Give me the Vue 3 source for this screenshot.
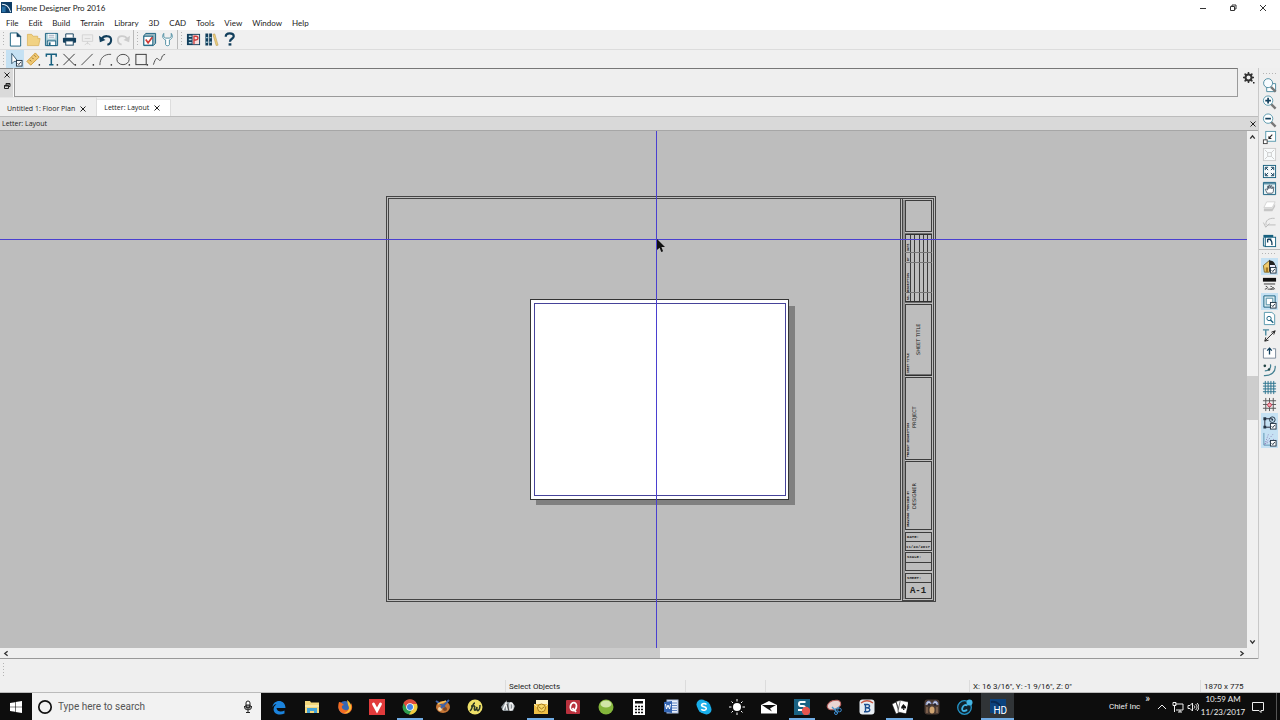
<script setup>
const menus = ['File', 'Edit', 'Build', 'Terrain', 'Library', '3D', 'CAD', 'Tools', 'View', 'Window', 'Help']

const T = '#17607f'
const D = '#123f5c'
const dot = '<rect x="13.5" y="13" width="1.5" height="1.5" fill="#222"/>'
const check = '<rect x="9" y="9" width="6" height="6" fill="#fff" stroke="#234" stroke-width="1"/><path d="M10.3 12l1.2 1.4 2.2-2.8" fill="none" stroke="#234"/>'

const fileTools = [
  { name: 'New', art: `<path d="M2.500 1H10l3.500 3.500V15h-11z" fill="#fff" stroke="${T}"/><path d="M9.500 1v4h4z" fill="${D}" stroke="${D}" stroke-width=".6"/>` },
  { name: 'Open', art: '<path d="M1.500 14.500V2.500h4.500l1.500 2h5v2.500h2.500L13.500 14.500z" fill="#f1d283" stroke="#d9b258" stroke-width=".8"/>' },
  { name: 'Save', art: `<path d="M1.500 1.500h13v13h-13z" fill="#a9cbd5" stroke="${T}"/><rect x="4" y="2" width="8" height="5" fill="#fff"/><path d="M5 3.500h6M5 5.500h6" stroke="#9ab"/><rect x="3.500" y="9.500" width="9" height="5" fill="#fff" stroke="${T}"/><path d="M5 11h2v3H5z" fill="${T}"/>` },
  { name: 'Print', art: `<path d="M4 6V2h8v4" fill="#fff" stroke="${D}"/><rect x="1" y="6" width="14" height="5.500" rx="1" fill="${D}"/><rect x="4" y="9.500" width="8" height="4.500" fill="#fff" stroke="${D}"/>` },
  { name: 'Send to layout', art: '<path d="M2.500 3h11v7h-11zM8 10v3M5 14l3-3 3 3M5 7h6" fill="#eee" stroke="#d3d3d3"/>' },
  { name: 'Undo', art: `<path d="M4 7.500C6 3.500 14 3 14 8.500c0 3-2 4.500-4 5" fill="none" stroke="${D}" stroke-width="2.200"/><path d="M1 4l1 7 6-2.500z" fill="${D}"/>` },
  { name: 'Redo', art: '<path d="M12 7.500C10 3.500 2 3 2 8.500c0 3 2 4.500 4 5" fill="none" stroke="#ccc" stroke-width="2"/><path d="M15 4l-1 7-6-2.500z" fill="#ccc"/>' }
]
const prefTools = [
  { name: 'Default settings', art: `<path d="M2 4l2-2.500h10.500v10.500L12 14.500H2z" fill="#9bb8c2" stroke="${T}"/><rect x="2" y="4.500" width="9.500" height="9.500" fill="#fff" stroke="${T}"/><path d="M4 8l2.500 3.500L11 5.500" fill="none" stroke="#d03a35" stroke-width="1.800"/>` },
  { name: 'Preferences', art: '<path d="M4 1.500C1.500 5 3.500 7.500 6 8.500v5c0 1.500 4 1.500 4 0v-5c2.500-1 4.500-3.500 2-7V5l-2 1.500H6L4 5z" fill="#fff" stroke="#4b8ca0"/>' }
]
const helpTools = [
  { name: 'Plan database', art: `<rect x="1" y="2" width="14" height="12" fill="${D}"/><path d="M3 4.500h3M3 8h3M3 11.500h3" stroke="#b8dbe6" stroke-width="1.500"/><rect x="7" y="3" width="7" height="10" fill="#f6dede"/><path d="M8.500 13V4.500h2c3 0 3 4 0 4h-2" fill="none" stroke="#cf3a3a" stroke-width="1.400"/>` },
  { name: 'Library browser', art: `<path d="M1.500 1.500h3v13h-3zM5.500 1.500h3v13h-3z" fill="${D}"/><path d="M2 6h2M6 6h2M2 11h2M6 11h2" stroke="#9cc6d4" stroke-width="1.500"/><path d="M9.500 2.500l2-.5L15 14l-2 .5z" fill="#edce7d" stroke="#a98b3a" stroke-width=".5"/>` },
  { name: 'Help', art: `<path d="M4 5c0-5 8.500-4.500 8.500-.5 0 3-4 2.500-4 6" fill="none" stroke="${D}" stroke-width="2.400"/><rect x="7" y="12" width="3" height="2.500" fill="${D}"/>` }
]
const drawTools = [
  { name: 'Select objects', on: true, art: `<path d="M4 1.500v11l2.500-2.500h4z" fill="#fff" stroke="#35576f"/>${check}` },
  { name: 'Dimension', art: `<path d="M1 10L10 1 14 5.500 5 14z" fill="#efc873" stroke="#cf9a38"/><path d="M4 8.500l1.500 1.500M6.500 6L8 7.500M9 3.500l1.500 1.500" stroke="#8c6820"/>${dot}` },
  { name: 'Text', art: `<path d="M2.500 5V2.500h10.500V5M7.800 2.500v11M5.500 13.500h4.600" fill="none" stroke="${T}" stroke-width="1.600"/>${dot}` },
  { name: 'Cross', art: `<path d="M1.500 2l12 12M13.500 2l-12 12" stroke="#333"/>${dot}` },
  { name: 'Line', art: `<path d="M1.500 14l12-12" stroke="#444"/>${dot}` },
  { name: 'Arc', art: `<path d="M2 14C2 6 7 2 14 2.500" fill="none" stroke="#555"/>${dot}` },
  { name: 'Circle', art: `<ellipse cx="7.500" cy="8" rx="6.500" ry="5.500" fill="none" stroke="#444"/>${dot}` },
  { name: 'Box', art: `<rect x="2" y="2.500" width="11" height="11" fill="none" stroke="#333"/>${dot}` },
  { name: 'Spline', art: '<path d="M1.500 13.500C4 6 5 6 7 8c2 2.500 3-.5 3.500-2.500S12.500 3 14 2.500" fill="none" stroke="#444"/>' }
]

const glass = '<path d="M9.500 9.500l5 5" stroke="#777" stroke-width="2.500"/>'
const frame = (c) => `<rect x="1.5" y="1.5" width="13" height="13" fill="#f8fbfc" stroke="${c}"/>`
const viewTools = [
  { name: 'Zoom', art: `<path d="M5 6h9.500v8.500H5z" fill="#fff" stroke="#4d8ba0"/>${glass}<circle cx="6.500" cy="5.500" r="4.800" fill="#f8fcff" stroke="#4d8ba0"/>` },
  { name: 'Zoom in', art: `${glass}<circle cx="6.500" cy="6" r="5" fill="#fff" stroke="#5698ac"/><path d="M3.500 6h6M6.500 3v6" stroke="${D}" stroke-width="1.800"/>` },
  { name: 'Zoom out', art: `${glass}<circle cx="6.500" cy="6" r="5" fill="#fff" stroke="#5698ac"/><path d="M3.500 6h6" stroke="${D}" stroke-width="1.800"/>` },
  { name: 'Undo zoom', art: `<rect x="4" y="1.500" width="10.500" height="10.500" fill="#fff" stroke="#5698ac"/><path d="M7 9l4-4" stroke="#222" stroke-width="1.200"/><path d="M7 6v3.500h3.500z" fill="#222"/><rect x="1.500" y="10.500" width="4" height="4" fill="#fff" stroke="#444"/>` },
  { name: 'Fill window building', art: `${frame('#ccc')}<path d="M3 3l3 3M13 3l-3 3M3 13l3-3M13 13l-3-3M6 6h4v4H6z" fill="none" stroke="#ccc"/>` },
  { name: 'Fill window', art: `${frame(T)}<path d="M4 4l2.500 2.500M12 4L9.500 6.500M4 12l2.500-2.500M12 12L9.500 9.500M3.500 6.500v-3h3M9.500 3.500h3v3M3.500 9.500v3h3M9.500 12.500h3v-3" fill="none" stroke="${D}"/>` },
  { name: 'Pan', art: `<path d="M1.500 1.500h13v13h-13z" fill="#e5f2f5" stroke="${T}"/><path d="M2 3h12" stroke="${T}"/><path d="M5.500 13L3.500 9l1-.5 1.500 1V5.500h1V8l.5-3.500h1V8l1-3h1v3.500l1-2h1l-.5 5-1 1.500z" fill="#fff" stroke="#345" stroke-width=".8"/>` },
  { name: 'Layer up', art: '<path d="M5 3h9l-3 6H2z" fill="#fff" stroke="#d3d3d3"/><path d="M2 10h9l3-5v3l-3 5H2z" fill="#c6c6c6"/>' },
  { name: 'Rotate back', art: '<path d="M13.500 2.500C7 2 3 5 4.500 10M1.500 7l2.500 5 4-4M6 9.500h8.500" fill="none" stroke="#bbb"/>' },
  { name: 'Swap views', art: `<path d="M1.500 2H12v3H1.500z" fill="${T}"/><path d="M1.500 5v9H4" fill="none" stroke="${T}"/><rect x="3.500" y="4.500" width="11" height="10" fill="#fff" stroke="${T}"/><path d="M6 6.500h4M6 6.500v3.500M6 6.500c4 0 5 3 4.500 6.500" fill="none" stroke="${D}" stroke-width="1.400"/>` }
]
const showTools = [
  { name: 'Color', on: true, art: `<path d="M1.500 7L8 1.500V14H2.500z" fill="#f1cb6d" stroke="#7b6930"/><path d="M8 1.500L14.500 7v6H8z" fill="#eef" stroke="#333"/><path d="M8 1.500c4 0 6 3 6 5H8z" fill="#222"/><rect x="4" y="9" width="2.500" height="5" fill="#a57922"/>${check}` },
  { name: 'Line weights', art: '<rect x="1" y="2" width="14" height="4" fill="#111"/><path d="M2 8.500h12" stroke="#333"/><path d="M3 14c3 0 4-3 1-3M6 14h7M12 12l1.500 2M9 11c3 0 3 3 0 3" fill="none" stroke="#444"/>' },
  { name: 'Page', on: true, art: `<path d="M2 2h12v12H2z" fill="#dcecf3" stroke="${T}"/><path d="M4.500 4.500h7v7h-7z" fill="#fff" stroke="#4d8ba0"/>${check}` },
  { name: 'Print preview', art: `<path d="M2.500 1.500h8L13.500 4v10.500h-11z" fill="#fff" stroke="#5698ac"/><circle cx="7.500" cy="8" r="2.300" fill="none" stroke="${T}"/><path d="M9 9.500l3 3" stroke="${T}" stroke-width="1.600"/>` },
  { name: 'Text leader', art: `<path d="M1 2h6.500M4 2v6" stroke="#4d8ba0" stroke-width="1.500"/><path d="M3 14L14 3M14 3l-4 1.500M14 3l-1.500 4M3 14l1-4M3 14l4-1" stroke="#222" fill="none"/>` },
  { name: 'Import', art: `<path d="M4.500 4h-3v10h13V4h-3" fill="#fff" stroke="#789"/><path d="M8 10V4M5.500 6L8 3.500 10.500 6" fill="none" stroke="${D}" stroke-width="1.400"/>` },
  { name: 'Arc snaps', art: '<circle cx="3" cy="3" r="1.400" fill="#244"/><path d="M9 1.500c1 4-2 7-6 7M14 3c1 6-4 11-12 10.500" fill="none" stroke="#438092" stroke-width="1.300"/><circle cx="7.500" cy="7" r="1.300" fill="#244"/>' },
  { name: 'Grid', art: `<path d="M1 3.500h14M1 6.500h14M1 9.500h14M1 12.500h14M3.500 1v14M6.500 1v14M9.500 1v14M12.500 1v14" stroke="#28718d"/>` },
  { name: 'Grid snaps', art: '<path d="M1 4h14M1 8h14M1 12h14M4 1v14M8 1v14M12 1v14" stroke="#555"/><circle cx="8" cy="8.500" r="2" fill="#efadb6" stroke="#cf3a52"/>' },
  { name: 'Object snaps', on: true, art: `<path d="M3 4v9h8M3 4h8" fill="none" stroke="#223"/><path d="M1.500 2.500h3v3h-3zM1.500 11.500h3v3h-3z" fill="#234"/><circle cx="11" cy="5" r="3" fill="none" stroke="#234"/><circle cx="11" cy="5" r="1" fill="#234"/>${check}` },
  { name: 'Angle snaps', on: true, art: `<path d="M2 1v13h12" fill="none" stroke="#5d93b1"/><path d="M3 13L12 2M3 13l11-6M3 13L7 2" stroke="#8b78b2" stroke-dasharray="1 1.500"/>${check}` }
]

const apps = [
  { name: 'Edge', art: '<path d="M1.500 8C2 0 14.500-.5 14.500 9H5.500c.5 4 5 4 8 2.500v3C7 17.500 1 13.500 3 8.500c-.5 0 2-4 5-4 2 0 3 1 3 2.500H6c0-3-3-2-4.500 1z" fill="#1b83dc"/>' },
  { name: 'File Explorer', art: '<path d="M1 2h5l1 1.500h8V14H1z" fill="#f3d77c"/><path d="M3 9h10v5h-3v-2H6v2H3z" fill="#43a3d8"/><path d="M1 6h14v2H1z" fill="#fae9a8"/>' },
  { name: 'Firefox', art: '<circle cx="8" cy="8.500" r="6.500" fill="#3467b3"/><path d="M2 3c-2 6 0 11 6 12 6 0 9-6 6-11 0 5-3 8-6 7-4-1-4-5-1-5C5 4 4 3 2 3z" fill="#f26b22"/><path d="M10 1c3 2 5 5 4 9-1 3-4 5-7 4 5-1 6-5 4-8z" fill="#f9bf37"/>' },
  { name: 'Vivaldi', art: '<rect width="16" height="16" fill="#e13a3b"/><path d="M4.500 5L8 11.500 11.500 5" fill="none" stroke="#fff" stroke-width="2.800" stroke-linecap="round"/>' },
  { name: 'Chrome', run: true, art: '<circle cx="8" cy="8" r="7.500" fill="#2f9e4f"/><path d="M1.500 4C4-1.500 13-1 15 5H8L4.500 9z" fill="#df4a3c"/><path d="M8 5h7c2 6-3 11-8 10.500l4-6.500z" fill="#f5c93d"/><circle cx="8" cy="8" r="3.800" fill="#fff"/><circle cx="8" cy="8" r="3" fill="#4386e8"/>' },
  { name: 'Paint', art: '<ellipse cx="8" cy="8" rx="7" ry="6" fill="#c77736"/><circle cx="5" cy="10" r="2" fill="#f3d7ac"/><circle cx="10" cy="10" r="2" fill="#7a4426"/><path d="M1 2l9 6M14 1L6 9" stroke="#3d62a8" stroke-width="2"/><path d="M3 5l8-3" stroke="#f4c25a" stroke-width="1.500"/>' },
  { name: 'Fw', art: '<circle cx="8" cy="8" r="7.500" fill="#eddf68"/><path d="M3 12c3-2 2-8 5-8M4 7h4M8 7c-2 6 1 5 2 1-1 6 3 4 3-2" fill="none" stroke="#283525" stroke-width="1.500"/>' },
  { name: 'Design 3D', art: '<path d="M1 8l4-5h7l3 4-2 5H3z" fill="#8c9499"/><path d="M3 11l3-7 1 7M10 4v7c4 0 4-7 0-7" fill="none" stroke="#f3f3f3" stroke-width="1.500"/><path d="M7 5l2 7" stroke="#444"/>' },
  { name: 'Outlook', run: true, art: '<rect x="3" y="1" width="12" height="9" fill="#fff4ca"/><path d="M1 5h14v10H1z" fill="#efbf44"/><path d="M1 5l7 6 7-6" fill="none" stroke="#fff1b5"/><circle cx="8.500" cy="9" r="4" fill="#f6d563" stroke="#a77a1c"/><path d="M6 8l2.500 2L11 8" fill="none" stroke="#a77a1c"/>' },
  { name: 'Quicken', art: '<rect x="1" y="1" width="14" height="14" rx="1" fill="#b9313d"/><ellipse cx="8.300" cy="7.500" rx="3" ry="4" transform="rotate(12 8 8)" fill="none" stroke="#fff" stroke-width="1.800"/><path d="M7.500 9l3.500 4" stroke="#fff" stroke-width="1.800"/>' },
  { name: 'Limewire', art: '<circle cx="8" cy="8" r="7.500" fill="#84b53b"/><ellipse cx="8" cy="5" rx="5.500" ry="3.500" fill="#d1e6a6"/>' },
  { name: 'Calculator', art: '<rect x="2" width="12" height="16" fill="#fff"/><rect x="4" y="2" width="8" height="2.500" fill="#111"/><path d="M4 7.500h8M4 10.500h8M4 13.500h8" stroke="#111" stroke-width="1.500" stroke-dasharray="2 1"/>' },
  { name: 'Word', art: '<rect x="4" y="1" width="11" height="13" fill="#e8f0fc" stroke="#a9bbdb"/><path d="M6 4h8M6 6.500h8M6 9h8M6 11.500h8" stroke="#5f83c1"/><path d="M1 3l8-1v12l-8-1z" fill="#3465b2"/><path d="M2.500 5l1 5 1.500-4 1.500 4 1-5" fill="none" stroke="#fff"/>' },
  { name: 'Skype', art: '<circle cx="5.500" cy="5.500" r="5" fill="#19aeea"/><circle cx="10.500" cy="10.500" r="5" fill="#19aeea"/><circle cx="8" cy="8" r="6.500" fill="#19aeea"/><path d="M10.500 5.500C8 3.500 5 5 5.700 6.700c.8 1.500 4.300.7 4.600 2.600.2 2-3.300 2.700-5 .9" fill="none" stroke="#fff" stroke-width="1.600"/>' },
  { name: 'Weather', art: '<circle cx="8" cy="8" r="4" fill="#fff"/><path d="M8 0v2.500M8 13.500V16M0 8h2.500M13.500 8H16M2.500 2.500l1.500 1.500M12 12l1.500 1.500M13.500 2.500L12 4M4 12l-1.500 1.500" stroke="#fff"/>' },
  { name: 'Mail', art: '<path d="M0 6l8-4 8 4v8.500H0z" fill="#fff"/><path d="M1 6h14l-6 3.500 2 3-5-3z" fill="#111"/>' },
  { name: 'Snagit', run: true, art: '<rect width="16" height="16" fill="#1a6283"/><path d="M11.500 3H6.500c-2 0-2 4 0 4h2.500c2.500 0 2.500 4 0 4H4" fill="none" stroke="#fff" stroke-width="2"/><circle cx="12" cy="12" r="4.200" fill="#e7554e"/>' },
  { name: 'Snipping Tool', art: '<ellipse cx="8" cy="6" rx="7" ry="4.500" transform="rotate(-20 8 6)" fill="#e9d5d4" stroke="#bb6360"/><path d="M6 8l6 6M8 11l5-3" stroke="#4a97cb" stroke-width="1.300"/><circle cx="13.500" cy="11" r="1.800" fill="none" stroke="#3d8cd0"/><circle cx="10" cy="14" r="1.500" fill="none" stroke="#3d8cd0"/>' },
  { name: 'Bluebeam', art: '<rect x=".5" y=".5" width="15" height="15" rx="3" fill="#e7edf3"/><path d="M2 4c4-3 8-3 12 0" fill="none" stroke="#c95843" stroke-width="1.300"/><path d="M5 5.500h3.500c3 0 2.500 3.300 0 3.300H6.500M8 8.800c4 0 3.500 4 0 4H5M6.500 5.500v7.300" fill="none" stroke="#1d4f8f" stroke-width="1.400"/>' },
  { name: 'Solitaire', run: true, art: '<path d="M0 5l4-2 4 10-4 2zM4 2.500L9 1l2 10-4 3z" fill="#fff" stroke="#111" stroke-width=".6"/><rect x="7" y="2" width="8.500" height="12" rx="1" transform="rotate(12 11 8)" fill="#fff" stroke="#111" stroke-width=".5"/><path d="M11.500 5c-2 2.500-3 3-2 4.500.8.500 1.500 0 1.800-.5L11 11h1.500l-.5-2c.5 1 2.500.8 2-1-.3-1-1.500-1.500-2.500-3z" fill="#111"/>' },
  { name: 'Panda', art: '<rect x=".5" y=".5" width="15" height="15" rx="3" fill="#4b3b32"/><path d="M2 6c0-5 5-5 5-1M9 5c0-4 5-4 5 1" fill="#c9d2e6" stroke="#8592c5"/><circle cx="5" cy="5.500" r="1.300" fill="#223"/><circle cx="11" cy="5.500" r="1.300" fill="#223"/><ellipse cx="8" cy="11" rx="2.500" ry="3.500" fill="#d0a571"/><path d="M3 8v6M13 8v6" stroke="#8c6c55" stroke-width="1.500"/>' },
  { name: 'Cyberlink', art: '<circle cx="7.500" cy="8.500" r="6.800" fill="#10222c" stroke="#2494c7" stroke-width="1.300"/><path d="M10.500 6.500C6 4 3 12 7 12c1.500 0 2.500-.5 3-1.500" fill="none" stroke="#3fb2e4" stroke-width="1.800"/><circle cx="12.500" cy="3.500" r="3" fill="#44b7e6"/>' }
]

const columns = [910.5, 914.5, 919.5, 923.5, 927.5]
</script>

<template>
  <div class="window">
    <header class="titlebar">
      <svg class="logo" viewBox="0 0 12 12"><rect width="12" height="12" fill="#0d3c66" /><path d="M1 2.500c5 0 8 3 9.500 8.500" fill="none" stroke="#e8f3fb" stroke-width="1.200" /><path d="M1 5h4v6H1z" fill="#2a72a8" /></svg>
      <h1>Home Designer Pro 2016</h1>
      <div class="winctl">
        <button aria-label="Minimize"><svg viewBox="0 0 10 10"><path d="M2 5.500h6" /></svg></button>
        <button aria-label="Restore"><svg viewBox="0 0 10 10"><path d="M2.500 3.500h4v4h-4zM4 3.500V2h4v4H6.500" /></svg></button>
        <button aria-label="Close"><svg viewBox="0 0 10 10"><path d="M2 2l6 6M8 2L2 8" /></svg></button>
      </div>
    </header>

    <nav class="menubar">
      <button v-for="m in menus" :key="m">{{ m }}</button>
    </nav>

    <div class="toolbar">
      <i class="grip"></i>
      <button v-for="t in fileTools" :key="t.name" class="tool" :aria-label="t.name"><svg viewBox="0 0 16 16" v-html="t.art"></svg></button>
      <i class="sep"></i><i class="grip"></i>
      <button v-for="t in prefTools" :key="t.name" class="tool" :aria-label="t.name"><svg viewBox="0 0 16 16" v-html="t.art"></svg></button>
      <i class="sep"></i><i class="grip"></i>
      <button v-for="t in helpTools" :key="t.name" class="tool" :aria-label="t.name"><svg viewBox="0 0 16 16" v-html="t.art"></svg></button>
    </div>
    <div class="toolbar draw">
      <i class="grip"></i>
      <button v-for="t in drawTools" :key="t.name" class="tool" :class="{ on: t.on }" :aria-label="t.name"><svg viewBox="0 0 16 16" v-html="t.art"></svg></button>
    </div>

    <div class="body">
      <main class="work">
        <section class="dock">
          <div class="dockctl">
            <button aria-label="Close panel"><svg viewBox="0 0 8 8"><path d="M1.500 1.500l5 5M6.500 1.500l-5 5" /></svg></button>
            <button aria-label="Float panel"><svg viewBox="0 0 8 8"><path d="M1.500 3.500h4v3h-4zM3 3V1.500h4v3H6M1 4h5M3 2h4" /></svg></button>
          </div>
          <div class="dockbox"></div>
          <button class="gear" aria-label="Settings"><svg viewBox="0 0 12 12"><circle cx="5.500" cy="5.500" r="3" fill="none" stroke="#333" stroke-width="2" /><path d="M5.500 0v2M5.500 9v2M0 5.500h2M9 5.500h2M1.600 1.600L3 3M8 8l1.400 1.400M9.400 1.600L8 3M3 8L1.600 9.400" stroke="#333" stroke-width="1.500" /><rect x="10" y="10" width="1.500" height="1.500" fill="#222" /></svg></button>
        </section>

        <div class="tabs" role="tablist">
          <div class="tab"><button role="tab" aria-selected="false">Untitled 1: Floor Plan</button><button class="x" aria-label="Close Floor Plan"><svg viewBox="0 0 8 8"><path d="M1.500 1.500l5 5M6.500 1.500l-5 5" /></svg></button></div>
          <div class="tab active"><button role="tab" aria-selected="true">Letter: Layout</button><button class="x" aria-label="Close Layout"><svg viewBox="0 0 8 8"><path d="M1.500 1.500l5 5M6.500 1.500l-5 5" /></svg></button></div>
        </div>

        <div class="doctitle">
          <h2>Letter: Layout</h2>
          <button class="x" aria-label="Close document"><svg viewBox="0 0 8 8"><path d="M1.500 1.500l5 5M6.500 1.500l-5 5" /></svg></button>
        </div>

        <div class="view">
          <div class="canvas">
            <svg viewBox="0 131 1247 517" preserveAspectRatio="xMidYMid slice">
              <g fill="none" stroke="#444" shape-rendering="crispEdges">
                <rect x="386.500" y="196.500" width="549" height="405" />
                <path d="M388.500 599.500V198.500H933.500V599.500" />
                <path d="M388.500 599.500H901M900.500 198V600M902.500 198V600H934" />
              </g>
              <path d="M904 200V599" stroke="#929292" stroke-width="2" />
              <g fill="none" stroke="#3c3c3c" shape-rendering="crispEdges">
                <rect x="905.500" y="200.500" width="26" height="31" />
                <rect x="905.500" y="234.500" width="26" height="67" />
                <path v-for="c in columns" :key="c" :d="`M${c} 234V302`" />
                <path d="M905 252.500h27M905 262.500h27M905 292.500h27" stroke="#777" />
                <rect x="905.500" y="304.500" width="26" height="71" />
                <rect x="905.500" y="377.500" width="26" height="82" />
                <rect x="905.500" y="461.500" width="26" height="68" />
                <rect x="905.500" y="532.500" width="26" height="18" />
                <path d="M905 541.500h27M905 562.500h27M905 582.500h27" />
                <rect x="905.500" y="552.500" width="26" height="18" />
                <rect x="905.500" y="573.500" width="26" height="25" />
              </g>
              <path d="M905 234h27M905 302h27M905 375h27" stroke="#222" />
              <g class="side">
                <text transform="translate(920 355) rotate(-90)">SHEET TITLE</text>
                <text transform="translate(916 428) rotate(-90)">PROJECT</text>
                <text transform="translate(916 509) rotate(-90)">DESIGNER</text>
              </g>
              <g class="tiny">
                <text transform="translate(909 300) rotate(-90)">NO. DESCRIPTION</text>
                <text transform="translate(909 261) rotate(-90)">BY</text>
                <text transform="translate(909 251) rotate(-90)">DATE</text>
                <text transform="translate(909 373) rotate(-90)">SHEET TITLE</text>
                <text transform="translate(909 457) rotate(-90)">PROJECT DESCRIPTION</text>
                <text transform="translate(909 527) rotate(-90)">DRAWINGS PROVIDED BY</text>
              </g>
              <g class="small">
                <text x="907" y="538">DATE:</text>
                <text x="906" y="548">11/23/2017</text>
                <text x="907" y="558">SCALE:</text>
                <text x="907" y="579">SHEET:</text>
              </g>
              <text class="sheetno" x="918" y="593">A-1</text>

              <rect x="536" y="306" width="259" height="199" fill="#808080" />
              <g shape-rendering="crispEdges">
                <rect x="530.500" y="299.500" width="258" height="200" fill="#fff" stroke="#333" />
                <rect x="534.500" y="303.500" width="251" height="192" fill="none" stroke="#46439a" />
                <path d="M0 239.500H1247M656.500 131V648" stroke="#4a40d0" />
              </g>
              <path d="M657 239v11l2.600-2.300 1.700 4.300 1.800-.8-1.700-4.200h3.600z" fill="#111" />
            </svg>
          </div>
          <div class="vscroll">
            <button aria-label="Scroll up"><svg viewBox="0 0 8 8"><path d="M2 5l2-2.500L6 5" /></svg></button>
            <div class="vtrack"><i></i><b></b><i class="after"></i></div>
            <button aria-label="Scroll down"><svg viewBox="0 0 8 8"><path d="M2 3l2 2.500L6 3" /></svg></button>
          </div>
        </div>
        <div class="hscroll">
          <button aria-label="Scroll left"><svg viewBox="0 0 8 8"><path d="M5 2L2.500 4 5 6" /></svg></button>
          <div class="htrack"><i></i><b></b><i class="after"></i></div>
          <button aria-label="Scroll right"><svg viewBox="0 0 8 8"><path d="M3 2l2.500 2L3 6" /></svg></button>
        </div>
      </main>

      <aside class="side-tools">
        <i class="hgrip"></i>
        <div class="group g1">
          <button v-for="t in viewTools" :key="t.name" :aria-label="t.name"><svg viewBox="0 0 16 16" v-html="t.art"></svg></button>
        </div>
        <i class="hgrip second"></i>
        <div class="group g2">
          <button v-for="t in showTools" :key="t.name" :class="{ on: t.on }" :aria-label="t.name"><svg viewBox="0 0 16 16" v-html="t.art"></svg></button>
        </div>
      </aside>
    </div>

    <footer class="status">
      <i class="grip"></i>
      <div class="cells">
        <span></span><span>Select Objects</span><span></span><span></span><span>X: 16 3/16", Y: -1 9/16", Z: 0"</span><span>1870 x 775</span>
      </div>
    </footer>

    <div class="taskbar">
      <button class="start" aria-label="Start"><svg viewBox="0 0 12 12"><path d="M0 2l5-.8v4.500H0zM5.600 1L12 0v5.700H5.600zM0 6.300h5v4.500L0 10zM5.600 6.300H12V12l-6.400-1z" fill="#fff" /></svg></button>
      <label class="search">
        <svg class="ring" viewBox="0 0 16 16"><circle cx="8" cy="8" r="6.200" fill="none" stroke="#111" stroke-width="1.700" /></svg>
        <input type="text" placeholder="Type here to search" aria-label="Type here to search">
        <svg class="mic" viewBox="0 0 10 14"><rect x="3" y="1" width="4" height="7" rx="2" fill="#fff" stroke="#222" /><path d="M3 5h4v2H3zM1.500 6v1.500c0 3 7 3 7 0V6M5 10v2.500M3 12.500h4" fill="#222" fill-opacity=".5" stroke="#222" /></svg>
      </label>
      <div class="apps">
        <button v-for="a in apps" :key="a.name" :class="{ run: a.run }" :aria-label="a.name"><svg viewBox="0 0 16 16" v-html="a.art"></svg></button>
        <button class="hd" aria-label="Home Designer"><svg viewBox="0 0 16 16"><rect width="16" height="14" fill="#0b427d" /><path d="M1 3c6-1 9 2 11 8" fill="none" stroke="#082b56" stroke-width="2" /></svg><span>HD</span></button>
      </div>
      <div class="tray">
        <span>Chief Inc</span><span class="more">»</span>
        <svg class="ti up" viewBox="0 0 12 12"><path d="M2 8l4-4 4 4" /></svg>
        <svg class="ti net" viewBox="0 0 12 12"><path d="M3 3h8v6H4M1 1.500h3v3H1zM2.500 4.500V11M6 11h4M8 9v2" /></svg>
        <svg class="ti vol" viewBox="0 0 12 12"><path d="M1 4.500h2l2.500-2.500v8L3 7.500H1zM7 4.500c1 1 1 2 0 3M8.500 3c2 2 2 4 0 6M10 2c2.500 2.500 2.500 5.500 0 8" /></svg>
        <div class="clock"><time>10:59 AM</time><time>11/23/2017</time></div>
        <svg class="ti note" viewBox="0 0 12 12"><path d="M.5 1.500h11v8H9v2l-2-2H.5z" /></svg>
        <i class="peek"></i>
      </div>
    </div>
  </div>
</template>

<style>
body { margin: 0; background: #efefef; }
</style>

<style scoped>
.window { height: 100vh; display: flex; flex-direction: column; overflow: hidden; background: #efefef; color: #222; font: 8px/12px Roboto, "Open Sans", sans-serif; }
button { border: 0; padding: 0; margin: 0; background: none; color: inherit; font: inherit; display: flex; align-items: center; justify-content: center; }
svg { display: block; flex: none; }
h1, h2 { margin: 0; font: inherit; }

.titlebar { flex: none; height: 15px; background: #fff; display: flex; align-items: center; padding-left: 1px; font-family: Lato, Roboto, sans-serif; }
.logo { width: 11px; height: 11px; margin-right: 4px; }
.winctl { margin-left: auto; display: flex; gap: 20px; padding-right: 12px; }
.winctl svg { width: 10px; height: 10px; fill: none; stroke: #333; }
.menubar { flex: none; height: 15px; background: #fff; display: flex; align-items: center; gap: 10px; padding-left: 6px; font-family: Lato, Roboto, sans-serif; }

.toolbar { flex: none; height: 19px; display: flex; align-items: center; border-bottom: 1px solid #dcdcdc; background: #f0f0f0; }
.toolbar.draw { height: 18px; border-bottom: 0; }
.grip { flex: none; width: 1px; height: 15px; margin: 0 2px 0 3px; background: repeating-linear-gradient(#b4b4b4 0 1px, transparent 1px 3px); }
.sep { width: 1px; align-self: stretch; background: #b9b9b9; margin-left: 1px; }
.tool { width: 18px; height: 18px; }
.tool svg { width: 15px; height: 15px; }
.on { background: #c5e1f3; }

.body { flex: 1; min-height: 0; display: flex; }
.work { flex: 1; min-width: 0; display: flex; flex-direction: column; border-right: 1px solid #c8c8c8; }
.dock { flex: none; height: 29px; display: flex; }
.dockctl { width: 13px; background: #dadada; border-top: 1px solid #888; border-right: 1px solid #f8f8f8; display: flex; flex-direction: column; align-items: center; padding-top: 2px; gap: 3px; }
.dockctl svg, .x svg { width: 8px; height: 8px; fill: none; stroke: #222; }
.dockbox { flex: 1; border: 1px solid #9a9a9a; border-top-color: #777; }
.gear { width: 20px; box-sizing: border-box; padding-left: 2px; align-self: flex-start; margin-top: 4px; }
.gear svg { width: 12px; height: 12px; }

.tabs { flex: none; height: 19px; display: flex; align-items: stretch; font-size: 7px; font-family: "Open Sans", Roboto, sans-serif; }
.tab { display: flex; align-items: center; gap: 4px; padding: 3px 9px 0 7px; border-right: 1px solid #ddd; border-top: 1px solid #e6e6e6; }
.tab.active { background: #fff; margin-top: 2px; padding-top: 0; }
.doctitle { flex: none; height: 13px; display: flex; align-items: center; justify-content: space-between; padding: 0 1px 0 2px; background: #d9d9d9; border-top: 1px solid #bcbcbc; font-size: 7px; font-family: "Open Sans", Roboto, sans-serif; }

.view { flex: 1; min-height: 0; display: flex; border-top: 1px solid #a6a6a6; }
.canvas { flex: 1; min-width: 0; background: #bdbdbd; overflow: hidden; }
.canvas svg { width: 100%; height: 100%; }
.side { font: 5px "DejaVu Sans", sans-serif; fill: #111; }
.tiny { font: bold 3px "Liberation Mono", monospace; fill: #111; }
.small { font: bold 4px "Liberation Mono", monospace; fill: #222; }
.sheetno { font: bold 9px "Liberation Mono", monospace; fill: #222; text-anchor: middle; }
.vscroll { width: 11px; display: flex; flex-direction: column; background: #f0f0f0; padding: 2px 0; }
.vscroll svg, .hscroll svg { width: 9px; height: 9px; fill: none; stroke: #333; stroke-width: 1.200; }
.vtrack { flex: 1; display: flex; flex-direction: column; }
.vtrack i { flex: 234; }
.vtrack b { flex: 44; background: #cdcdcd; }
.vtrack i.after { flex: 217; }
.hscroll { flex: none; height: 10px; display: flex; padding: 0 12px 0 2px; border-bottom: 1px solid #999; }
.htrack { flex: 1; display: flex; }
.htrack i { flex: 539; }
.htrack b { flex: 110; background: #cbcbcb; }
.htrack i.after { flex: 577; }

.side-tools { width: 21px; display: flex; flex-direction: column; align-items: center; }
.hgrip { flex: none; width: 14px; height: 1px; margin: 5px 0 3px; background: repeating-linear-gradient(90deg, #b4b4b4 0 1px, transparent 1px 3px); }
.hgrip.second { width: 21px; height: 5px; margin: 0 0 3px; border-top: 1px solid #bbb; background: repeating-linear-gradient(90deg, #b4b4b4 0 1px, transparent 1px 3px) 3px 3px / 14px 1px no-repeat; }
.group { display: flex; flex-direction: column; width: 17px; }
.group button { flex: 1; min-height: 0; }
.group svg { width: 15px; height: 15px; }
.g1 { height: 172px; }
.g2 { height: 190px; }

.status { flex: none; height: 34px; display: flex; align-items: flex-start; border-bottom: 1px solid #bbb; box-sizing: border-box; }
.status .grip { margin-top: 4px; }
.cells { flex: 1; align-self: flex-end; display: grid; grid-template-columns: 499fr 180fr 80fr 204fr 231fr 80fr; }
.cells span { height: 12px; line-height: 14px; padding-left: 3px; border-left: 1px solid #dcdcdc; white-space: nowrap; }
.cells span:first-child { border-color: transparent; }

.taskbar { flex: none; height: 27px; display: flex; background: #0d0d0d; color: #eee; }
.start { width: 32px; }
.start svg { width: 12px; height: 12px; }
.search { flex: 0 1 229px; display: flex; align-items: center; background: #f2f2f2; padding: 0 8px 0 5px; box-sizing: border-box; }
.ring { width: 16px; height: 16px; margin-right: 5px; }
.search input { flex: 1; min-width: 0; border: 0; padding: 0; background: none; outline: 0; color: #222; font: 10px/14px Roboto, sans-serif; }
.search input::placeholder { color: #555; opacity: 1; }
.mic { width: 10px; height: 14px; }
.apps { flex: 0 1 753px; display: flex; padding-left: 2px; box-sizing: border-box; }
.apps button { flex: 1; position: relative; }
.apps svg { width: 16px; height: 16px; }
.run::after, .hd::after { content: ""; position: absolute; left: 3px; right: 3px; bottom: 0; height: 2px; background: #71ace4; }
.apps .hd { background: #303437; }
.apps .hd::after { left: 0; right: 0; }
.hd span { position: absolute; left: 12px; bottom: 4px; font-size: 10px; line-height: 10px; color: #fff; }
.tray { margin-left: auto; display: flex; align-items: center; }
.more { align-self: flex-start; font-size: 10px; line-height: 12px; margin: 0 6px 0 5px; }
.ti { width: 12px; height: 12px; fill: none; stroke: #eee; }
.up { margin-right: 4px; }
.vol { margin: 0 4px 0 3px; }
.clock { display: flex; flex-direction: column; align-items: center; width: 40px; margin-bottom: 1px; line-height: 13px; white-space: nowrap; font-family: Lato, Roboto, sans-serif; }
.note { margin: 0 12px 0 9px; }
.peek { width: 1px; align-self: stretch; margin-right: 3px; background: #555; }
</style>
